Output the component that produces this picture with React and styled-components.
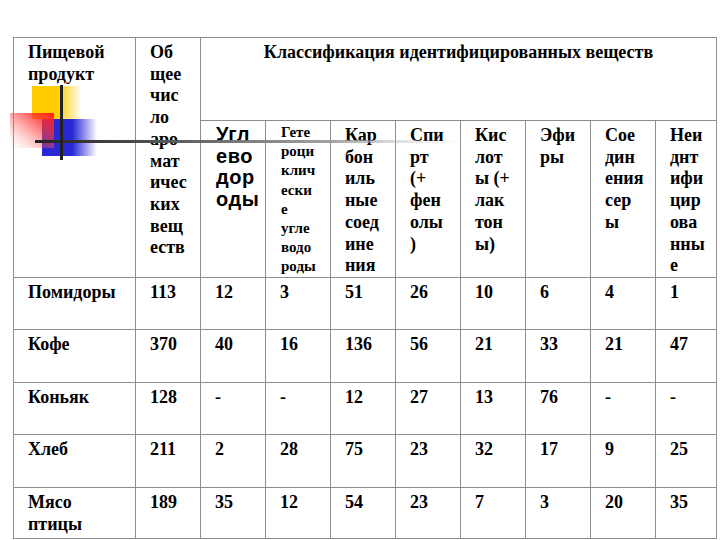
import React from "react";
import styled, { createGlobalStyle } from "styled-components";

const Global = createGlobalStyle`
  html, body { margin: 0; padding: 0; background: #fff; }
  body { width: 720px; height: 540px; overflow: hidden; }
`;

const Page = styled.div`
  position: relative;
  width: 720px;
  height: 540px;
  padding: 37px 0 0 13px;
  box-sizing: border-box;
  font-family: "Liberation Serif", "Times New Roman", serif;
  font-weight: bold;
  color: #000;
`;

const Table = styled.div`
  display: grid;
  grid-template-columns: 121px repeat(8, 64px) 60px;
  grid-template-rows: 82px 156px 51px 52px 51px 52px 50px;
  gap: 1px;
  padding: 1px;
  width: max-content;
  background: #8e8e8e;
`;

const Cell = styled.div`
  background: #fff;
  overflow: visible;
  padding: ${(p) =>
    p.$small ? "2px 0 0 15px" : p.$center ? "4px 0 0 0" : p.$sans ? "3px 0 0 15px" : "4px 0 0 14px"};
  font-size: ${(p) => (p.$small ? "15px" : p.$sans ? "20px" : "18px")};
  line-height: ${(p) => (p.$small ? "19.2px" : "21.7px")};
  letter-spacing: ${(p) => (p.$sans ? "0.6px" : "0")};
  font-family: ${(p) =>
    p.$sans
      ? '"Liberation Sans", Arial, sans-serif'
      : '"Liberation Serif", "Times New Roman", serif'};
  text-align: ${(p) => (p.$center ? "center" : "left")};
  grid-row: ${(p) => (p.$rows ? `span ${p.$rows}` : "auto")};
  grid-column: ${(p) => (p.$cols ? `span ${p.$cols}` : "auto")};
  white-space: nowrap;
`;

const Logo = styled.svg`
  position: absolute;
  left: 0;
  top: 80px;
  pointer-events: none;
  z-index: 2;
`;

const lines = (s) =>
  s.split("/").map((t, i, a) => (
    <React.Fragment key={i}>
      {t}
      {i < a.length - 1 && <br />}
    </React.Fragment>
  ));

const subHeads = [
  { t: "Угл/ево/дор/оды", sans: true },
  { t: "Гете/роци/клич/ески/е/угле/водо/роды", small: true },
  { t: "Кар/бон/иль/ные/соед/ине/ния" },
  { t: "Спи/рт/(+/фен/олы/)" },
  { t: "Кис/лот/ы (+/лак/тон/ы)" },
  { t: "Эфи/ры" },
  { t: "Сое/дин/ения/сер/ы" },
  { t: "Неи/днт/ифи/цир/ова/нны/е" },
];

const rows = [
  ["Помидоры", "113", "12", "3", "51", "26", "10", "6", "4", "1"],
  ["Кофе", "370", "40", "16", "136", "56", "21", "33", "21", "47"],
  ["Коньяк", "128", "-", "-", "12", "27", "13", "76", "-", "-"],
  ["Хлеб", "211", "2", "28", "75", "23", "32", "17", "9", "25"],
  ["Мясо/птицы", "189", "35", "12", "54", "23", "7", "3", "20", "35"],
];

export default function App() {
  return (
    <>
      <Global />
      <Page>
        <Table>
          <Cell $rows={2}>{lines("Пищевой/продукт")}</Cell>
          <Cell $rows={2}>{lines("Об/щее/чис/ло/аро/мат/ичес/ких/вещ/еств")}</Cell>
          <Cell $cols={8} $center>
            Классификация идентифицированных веществ
          </Cell>
          {subHeads.map((h, i) => (
            <Cell key={i} $sans={h.sans} $small={h.small}>
              {lines(h.t)}
            </Cell>
          ))}
          {rows.map((r, ri) =>
            r.map((v, ci) => <Cell key={`${ri}-${ci}`}>{lines(v)}</Cell>)
          )}
        </Table>
        <Logo width="470" height="85" viewBox="0 0 470 85">
          <defs>
            <linearGradient id="gy" x1="0" y1="0" x2="1" y2="0">
              <stop offset="0" stopColor="#FFCC00" stopOpacity="1" />
              <stop offset="0.5" stopColor="#FFCC00" stopOpacity="1" />
              <stop offset="1" stopColor="#FFCC00" stopOpacity="0" />
            </linearGradient>
            <linearGradient id="gb" x1="0" y1="0" x2="1" y2="0">
              <stop offset="0" stopColor="#2828D4" stopOpacity="1" />
              <stop offset="0.55" stopColor="#2828D4" stopOpacity="1" />
              <stop offset="1" stopColor="#2828D4" stopOpacity="0" />
            </linearGradient>
            <linearGradient id="gr" x1="1" y1="0" x2="0" y2="1">
              <stop offset="0" stopColor="#FF1E1E" stopOpacity="1" />
              <stop offset="0.3" stopColor="#FF3030" stopOpacity="0.75" />
              <stop offset="0.75" stopColor="#FF6060" stopOpacity="0.2" />
              <stop offset="1" stopColor="#FF8080" stopOpacity="0" />
            </linearGradient>
            <linearGradient id="gl" x1="0" y1="0" x2="1" y2="0">
              <stop offset="0" stopColor="#222" stopOpacity="1" />
              <stop offset="0.3" stopColor="#555" stopOpacity="1" />
              <stop offset="0.7" stopColor="#999" stopOpacity="0.9" />
              <stop offset="1" stopColor="#ccc" stopOpacity="0" />
            </linearGradient>
          </defs>
          <rect x="32" y="6" width="50" height="33" fill="url(#gy)" />
          <rect x="42" y="39" width="55" height="37" fill="url(#gb)" />
          <rect x="10" y="33" width="44" height="35" fill="url(#gr)" />
          <rect x="35" y="60" width="425" height="3" fill="url(#gl)" />
          <rect x="60" y="5" width="3" height="75" fill="#222" />
        </Logo>
      </Page>
    </>
  );
}
